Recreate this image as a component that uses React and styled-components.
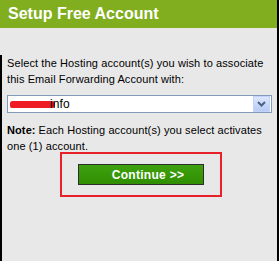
import React from 'react';
import styled, { createGlobalStyle } from 'styled-components';

const GlobalStyle = createGlobalStyle`
  html, body {
    margin: 0;
    padding: 0;
    background: #e8e8e8;
  }
`;

const Panel = styled.div`
  width: 279px;
  height: 261px;
  box-sizing: border-box;
  border-right: 2px solid #000;
  background: #e8e8e8;
  display: flex;
  flex-direction: column;
  font-family: 'Liberation Sans', Arial, sans-serif;
  overflow: hidden;
`;

const Header = styled.div`
  height: 28px;
  flex: none;
  background: #80ae1e;
  color: #fff;
  font-size: 16px;
  font-weight: bold;
  line-height: 27px;
  padding-left: 8px;
`;

const Gap = styled.div`
  height: 27px;
  flex: none;
`;

const Body = styled.div`
  flex: 1;
  border-left: 2px solid #000;
  padding: 0 5px;
  font-size: 11px;
  letter-spacing: 0.1px;
  line-height: 16px;
  color: #000;
`;

const Intro = styled.p`
  margin: 0;
`;

const SelectBox = styled.div`
  margin-top: 8px;
  height: 18px;
  box-sizing: border-box;
  border: 1px solid #7f9db9;
  background: #fff;
  display: flex;
  align-items: center;
  padding-left: 2px;
`;

const SelectValue = styled.span`
  flex: 1;
  display: flex;
  align-items: center;
  font-size: 12px;
`;

const Redacted = styled.span`
  display: inline-block;
  width: 45px;
  height: 7px;
  border-radius: 4px 6px 5px 3px;
  background: #ee1c24;
  margin-right: -5px;
`;

const ArrowButton = styled.div`
  width: 15px;
  height: 14px;
  margin-right: 1px;
  background: linear-gradient(#dde7fc, #b7cbf5);
  border: 1px solid #c3d3fd;
  display: flex;
  align-items: center;
  justify-content: center;
`;

const Note = styled.p`
  margin: 9px 0 0 0;
`;

const NoteLabel = styled.b`
  margin-right: 3px;
`;

const ButtonFrame = styled.div`
  margin: -2px 0 0 53px;
  width: 162px;
  height: 45px;
  box-sizing: border-box;
  border: 2px solid #e8202a;
  display: flex;
  align-items: center;
  justify-content: center;
`;

const ContinueButton = styled.button`
  width: 126px;
  height: 21px;
  box-sizing: border-box;
  border: 1px solid #2d2d2d;
  background: linear-gradient(#3fa010, #2f8f00);
  color: #fff;
  font-family: 'Liberation Sans', Arial, sans-serif;
  font-size: 12px;
  font-weight: bold;
  letter-spacing: 0.3px;
  padding: 0 0 0 14px;
  cursor: pointer;
`;

export default function App() {
  return (
    <>
      <GlobalStyle />
      <Panel>
        <Header>Setup Free Account</Header>
        <Gap />
        <Body>
          <Intro>
            Select the Hosting account(s) you wish to associate this Email
            Forwarding Account with:
          </Intro>
          <SelectBox>
            <SelectValue>
              <Redacted />
              info
            </SelectValue>
            <ArrowButton>
              <svg width="9" height="6" viewBox="0 0 9 6">
                <path d="M1 1 L4.5 4.5 L8 1" fill="none" stroke="#4d6185" strokeWidth="2" />
              </svg>
            </ArrowButton>
          </SelectBox>
          <Note>
            <NoteLabel>Note:</NoteLabel>Each Hosting account(s) you select
            activates one (1) account.
          </Note>
          <ButtonFrame>
            <ContinueButton>Continue &gt;&gt;</ContinueButton>
          </ButtonFrame>
        </Body>
      </Panel>
    </>
  );
}
